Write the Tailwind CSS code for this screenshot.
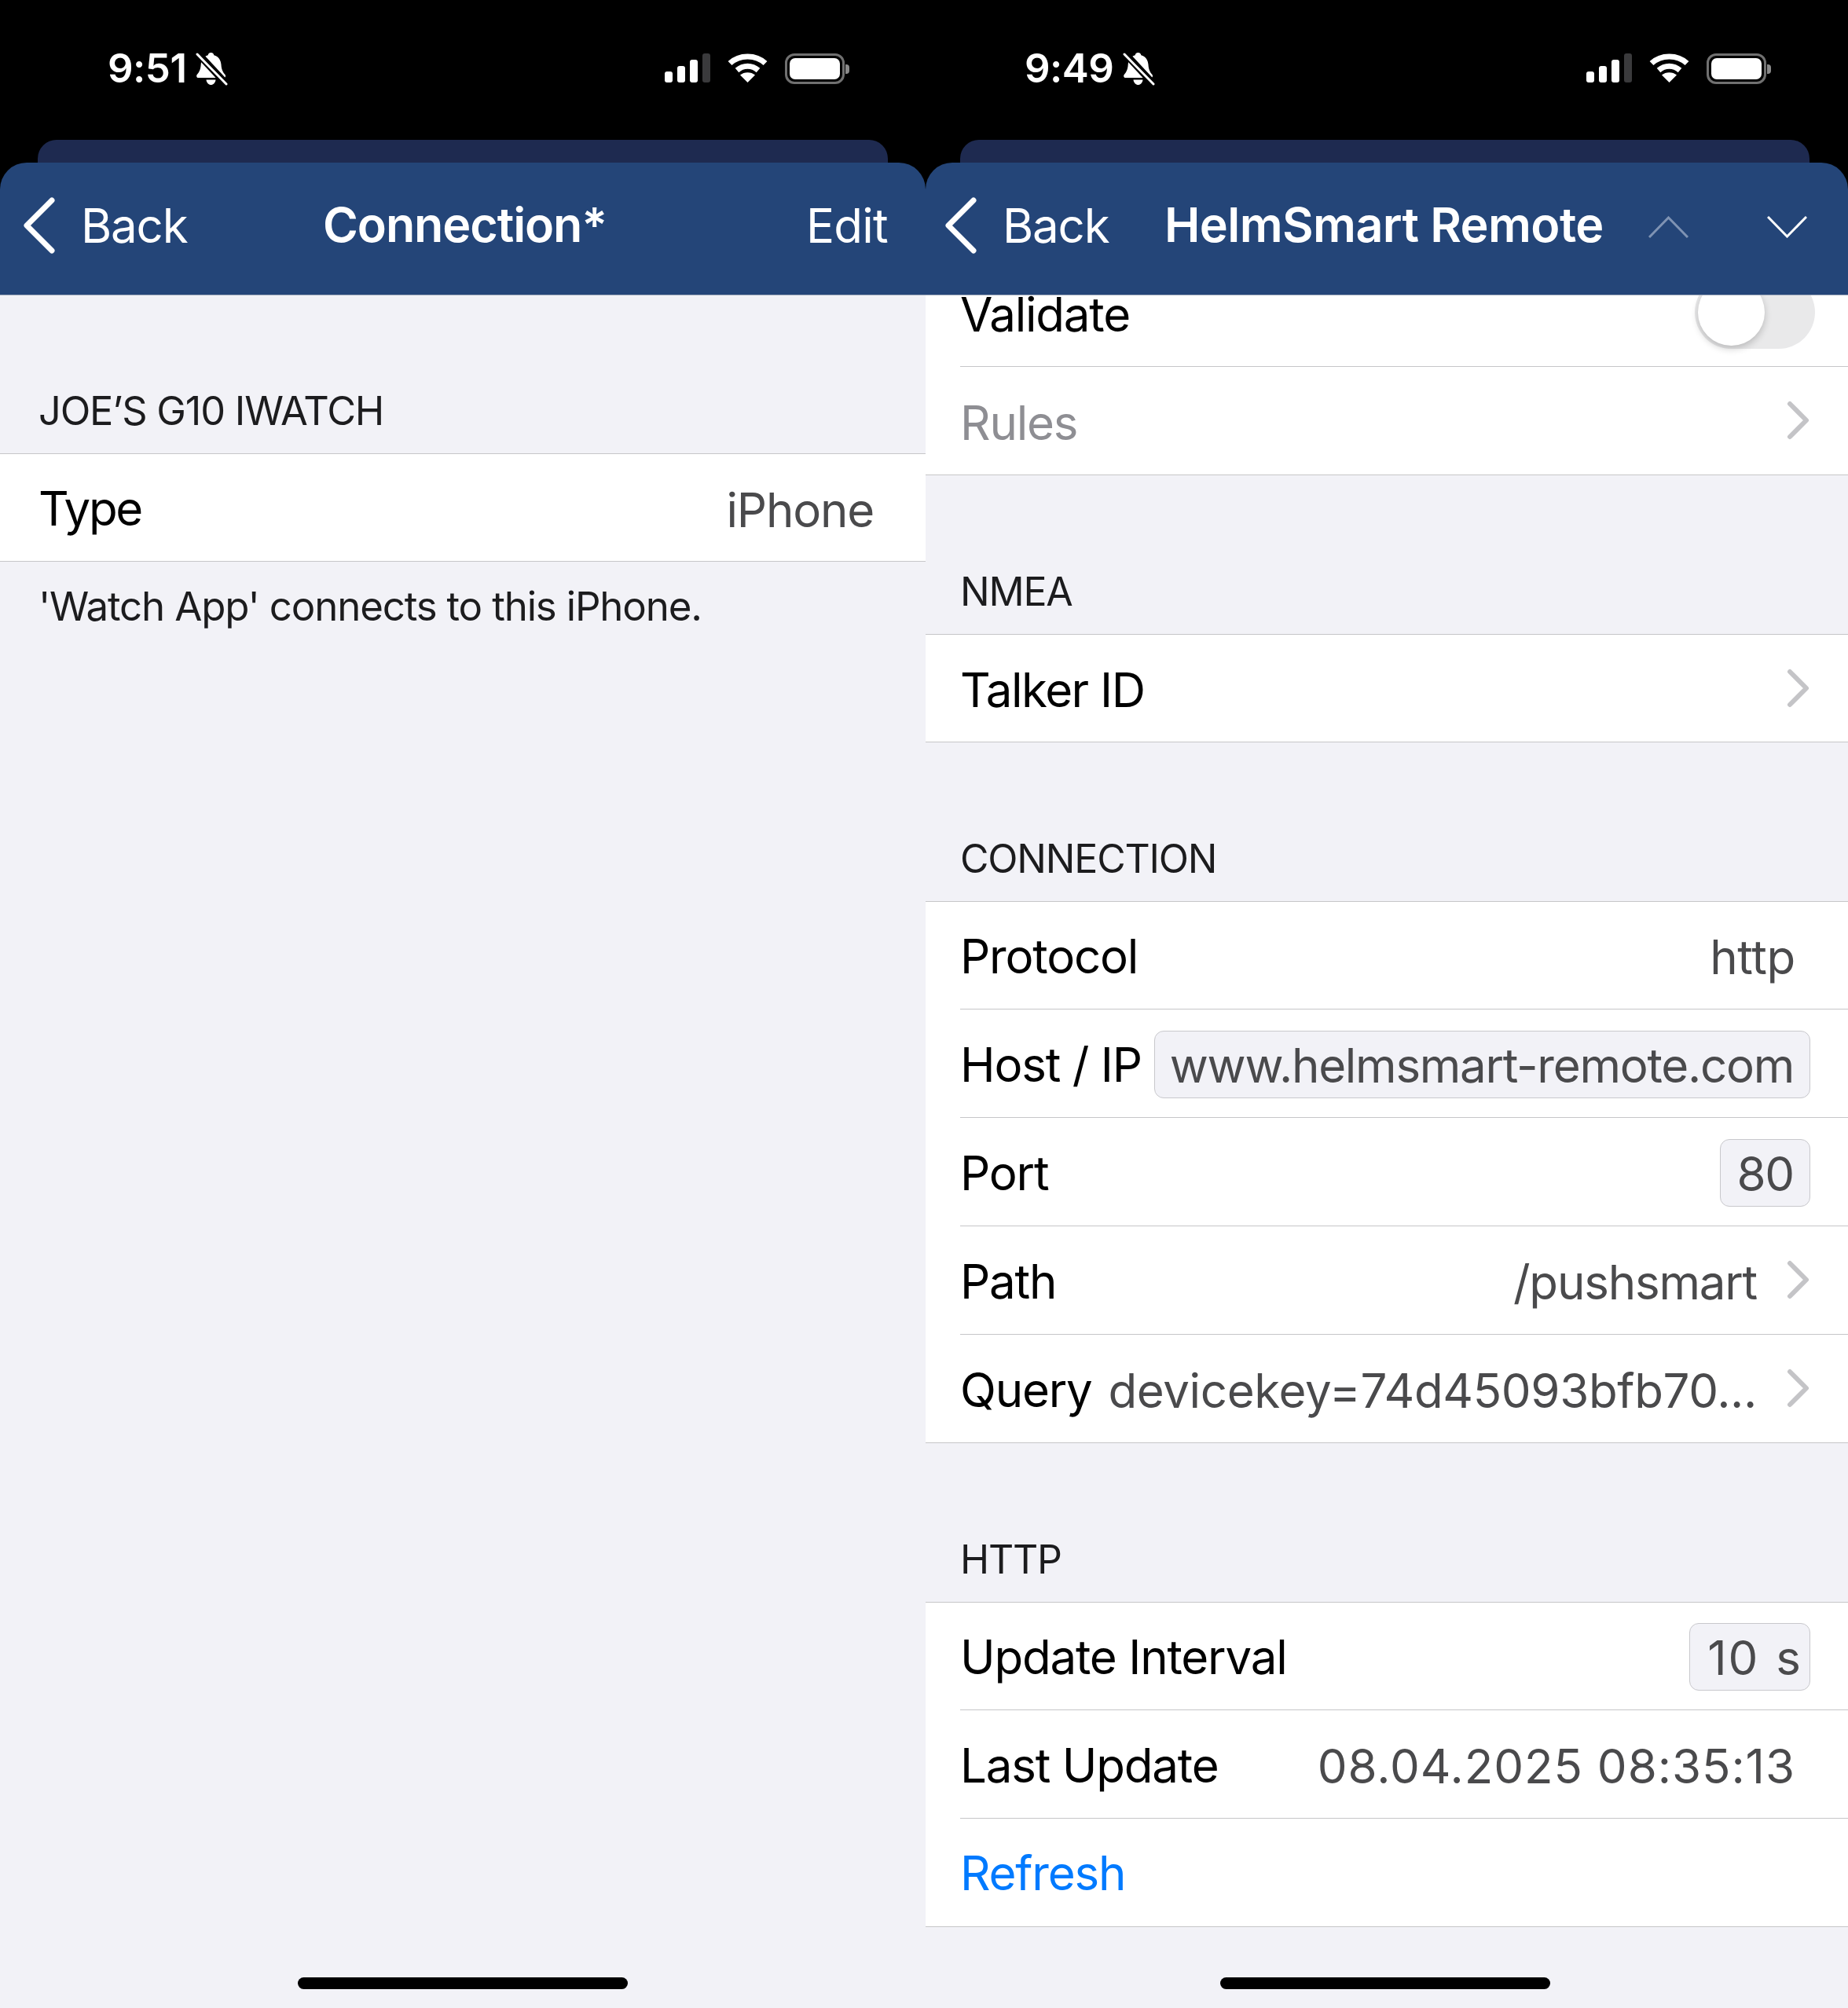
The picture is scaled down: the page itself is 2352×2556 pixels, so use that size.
<!DOCTYPE html>
<html lang="en">

<head>
    <meta charset="UTF-8">
    <meta name="viewport" content="width=device-width, initial-scale=1.0">
    <script src="https://cdn.jsdelivr.net/npm/@tailwindcss/browser@4"></script>
    <title>Connection | HelmSmart Remote</title>
</head>

<body class="bg-black [font-family:Inter,'Liberation_Sans',sans-serif] text-[60px] tracking-[-0.02em] text-black">
    <svg class="hidden">
        <symbol id="bell" viewBox="0 0 42 43">
            <path fill="#fff" d="M19.500 1c2.300 0 3.600 1.400 3.800 3.200 6 1.500 8.800 6.500 9.200 12 .4 6 1.900 9.300 5 12.800 1.200 1.800.3 4-1.800 4H3.500c-2.100 0-3-2.200-1.800-4 3.100-3.500 4.600-6.800 5-12.800.4-5.500 3.200-10.500 9-12C15.900 2.400 17.200 1 19.500 1z" />
            <path fill="#fff" d="M13.500 35.500h12c-.5 4-3 6.500-6 6.500s-5.500-2.500-6-6.500z" />
            <path stroke="#000" stroke-width="9" d="M1 0l40 43" />
            <path stroke="#fff" stroke-width="3" stroke-linecap="round" d="M2 3l37 38" />
        </symbol>
        <symbol id="wifi" viewBox="0 0 51 37">
            <path fill="none" stroke="#fff" stroke-width="7" d="M3 12.500C15 1 36 1 48 12.500" />
            <path fill="none" stroke="#fff" stroke-width="7" d="M12 21.500c8-7 19-7 27 0" />
            <path fill="#fff" d="M25.500 37L16 27.500c5-4.500 14-4.500 19 0z" />
        </symbol>
        <symbol id="chevron" viewBox="0 0 30 50">
            <path fill="none" stroke="#c4c4c7" stroke-width="6" stroke-linecap="round" stroke-linejoin="round" d="M4 4l21 21L4 46" />
        </symbol>
        <symbol id="back" viewBox="0 0 42 72">
            <path fill="none" stroke="#fff" stroke-width="7" stroke-linecap="round" stroke-linejoin="round" d="M37 4L5 36l32 32" />
        </symbol>
    </svg>

    <div class="grid grid-cols-[1178px_1174px] h-[2556px] overflow-hidden">
        <!-- Left phone -->
        <div class="flex flex-col bg-black">
            <div class="h-[178px] flex items-start justify-between pl-[137px] pr-[97px] pt-[62px] text-white">
                <div class="flex items-center gap-[12px] h-[50px] text-[51px]">
                    <span class="font-semibold tracking-[-0.01em]">9:51</span>
                    <svg class="w-[42px] h-[43px]"><use href="#bell" /></svg>
                </div>
                <div class="flex items-start gap-[22px] h-[50px] pt-[6px]">
                    <div class="flex items-end gap-[6px] h-[37px]">
                        <div class="w-[10px] h-[14px] rounded-[3px] bg-white"></div>
                        <div class="w-[10px] h-[21px] rounded-[3px] bg-white"></div>
                        <div class="w-[10px] h-[29px] rounded-[3px] bg-white"></div>
                        <div class="w-[10px] h-[37px] rounded-[3px] bg-[#3a3a3c]"></div>
                    </div>
                    <svg class="w-[51px] h-[37px]"><use href="#wifi" /></svg>
                    <div class="flex items-center">
                        <div class="w-[76px] h-[39px] rounded-[12px] border-[3px] border-[#707070] p-[3px]">
                            <div class="w-full h-full rounded-[7px] bg-white"></div>
                        </div>
                        <div class="w-[5px] h-[12px] rounded-r-[4px] bg-[#8a8a8a] ml-[1px]"></div>
                    </div>
                </div>
            </div>
            <div class="h-[29px] mx-[48px] rounded-t-[24px] bg-[#1e2a50]"></div>
            <div class="h-[169px] rounded-t-[34px] bg-[#244578] border-b border-[#9aa5b8] flex items-center pb-[8px] text-white">
                <div class="w-[411px] flex items-center pl-[29px] gap-[32px]">
                    <svg class="w-[42px] h-[72px]"><use href="#back" /></svg>
                    <span>Back</span>
                </div>
                <span class="font-semibold text-[61px] tracking-[-0.018em]">Connection*</span>
                <span class="ml-auto pr-[48px] tracking-[-0.012em]">Edit</span>
            </div>
            <div class="flex-1 bg-[#f2f2f7] flex flex-col">
                <div class="h-[201px] px-[49px] pb-[24px] flex items-end text-[50.500px] leading-[60px] text-[#1c1c1e]">JOE’S G10 IWATCH</div>
                <div class="h-[138px] bg-white border-y border-[#c6c6c8] flex items-center justify-between pl-[49px] pr-[66px] pt-[2px]">
                    <span class="tracking-[-0.04em]">Type</span>
                    <span class="text-[#4a4a4c] pt-[3px]">iPhone</span>
                </div>
                <div class="px-[49px] pt-[27px] text-[51px] leading-[60px] tracking-[-0.023em] text-[#1c1c1e]">'Watch App' connects to this iPhone.</div>
                <div class="mt-auto h-[50px] flex justify-center items-start pt-[11px]">
                    <div class="w-[420px] h-[15px] rounded-full bg-black"></div>
                </div>
            </div>
        </div>

        <!-- Right phone -->
        <div class="flex flex-col bg-black">
            <div class="h-[178px] flex items-start justify-between pl-[126px] pr-[98px] pt-[62px] text-white">
                <div class="flex items-center gap-[12px] h-[50px] text-[51px]">
                    <span class="font-semibold tracking-[-0.01em]">9:49</span>
                    <svg class="w-[42px] h-[43px]"><use href="#bell" /></svg>
                </div>
                <div class="flex items-start gap-[22px] h-[50px] pt-[6px]">
                    <div class="flex items-end gap-[6px] h-[37px]">
                        <div class="w-[10px] h-[14px] rounded-[3px] bg-white"></div>
                        <div class="w-[10px] h-[21px] rounded-[3px] bg-white"></div>
                        <div class="w-[10px] h-[29px] rounded-[3px] bg-white"></div>
                        <div class="w-[10px] h-[37px] rounded-[3px] bg-[#3a3a3c]"></div>
                    </div>
                    <svg class="w-[51px] h-[37px]"><use href="#wifi" /></svg>
                    <div class="flex items-center">
                        <div class="w-[76px] h-[39px] rounded-[12px] border-[3px] border-[#707070] p-[3px]">
                            <div class="w-full h-full rounded-[7px] bg-white"></div>
                        </div>
                        <div class="w-[5px] h-[12px] rounded-r-[4px] bg-[#8a8a8a] ml-[1px]"></div>
                    </div>
                </div>
            </div>
            <div class="h-[29px] ml-[44px] mr-[49px] rounded-t-[24px] bg-[#1e2a50]"></div>
            <div class="h-[169px] rounded-t-[34px] bg-[#244578] border-b border-[#9aa5b8] flex items-center pb-[8px] text-white">
                <div class="w-[304px] flex items-center pl-[24px] gap-[32px]">
                    <svg class="w-[42px] h-[72px]"><use href="#back" /></svg>
                    <span>Back</span>
                </div>
                <span class="font-semibold text-[61px] tracking-[-0.01em]">HelmSmart Remote</span>
                <div class="ml-auto flex items-center gap-[100px] pr-[52px] pt-[4px]">
                    <svg class="w-[51px] h-[28px]" viewBox="0 0 51 28"><path fill="none" stroke="#7f93b3" stroke-width="3" d="M1 27L25.500 2 50 27" /></svg>
                    <svg class="w-[51px] h-[28px]" viewBox="0 0 51 28"><path fill="none" stroke="#fff" stroke-width="3" d="M1 1l24.500 25L50 1" /></svg>
                </div>
            </div>

            <div class="flex-1 bg-[#f2f2f7] flex flex-col">
                <div class="bg-white border-b border-[#c6c6c8]">
                    <div class="ml-[44px] h-[91px] border-b border-[#c6c6c8] flex items-end justify-between pr-[42px] pb-[22px] overflow-hidden">
                        <span class="leading-[50px] mb-[19px]">Validate</span>
                        <div class="w-[153px] h-[93px] shrink-0 rounded-full bg-[#e9e9ea] p-[4px]">
                            <div class="w-[85px] h-[85px] rounded-full bg-white shadow-[0_4px_10px_rgba(0,0,0,0.2)]"></div>
                        </div>
                    </div>
                    <div class="ml-[44px] h-[137px] flex items-center justify-between pr-[48px] pt-[4px]">
                        <span class="text-[#8e8e93]">Rules</span>
                        <svg class="w-[30px] h-[50px] -mt-[6px]"><use href="#chevron" /></svg>
                    </div>
                </div>

                <div class="h-[202px] px-[44px] pb-[24px] flex items-end text-[50px] leading-[60px] text-[#1c1c1e]">NMEA</div>
                <div class="bg-white border-y border-[#c6c6c8]">
                    <div class="ml-[44px] h-[136px] flex items-center justify-between pr-[48px] pt-[3px]">
                        <span class="tracking-[-0.025em]">Talker ID</span>
                        <svg class="w-[30px] h-[50px] -mt-[4px]"><use href="#chevron" /></svg>
                    </div>
                </div>

                <div class="h-[202px] px-[44px] pb-[24px] flex items-end text-[50px] leading-[60px] text-[#1c1c1e]">CONNECTION</div>
                <div class="bg-white border-y border-[#c6c6c8]">
                    <div class="ml-[44px] h-[137px] border-b border-[#c6c6c8] flex items-center justify-between pr-[67px] pt-[2px]">
                        <span>Protocol</span>
                        <span class="text-[#4a4a4c] pt-[2px] tracking-[-0.005em]">http</span>
                    </div>
                    <div class="ml-[44px] h-[138px] border-b border-[#c6c6c8] flex items-center justify-between pr-[48px] pt-[2px]">
                        <span>Host / IP</span>
                        <div class="h-[86px] rounded-[12px] border border-[#c8c8cc] bg-[#f2f2f7] pl-[19px] pr-[20px] pt-[2px] flex items-center text-[#4a4a4c] tracking-[-0.021em]">www.helmsmart-remote.com</div>
                    </div>
                    <div class="ml-[44px] h-[138px] border-b border-[#c6c6c8] flex items-center justify-between pr-[48px] pt-[3px]">
                        <span>Port</span>
                        <div class="h-[86px] rounded-[12px] border border-[#c8c8cc] bg-[#f2f2f7] px-[20px] pt-[2px] flex items-center text-[#4a4a4c]">80</div>
                    </div>
                    <div class="ml-[44px] h-[138px] border-b border-[#c6c6c8] flex items-center justify-between pr-[48px] pt-[2px]">
                        <span>Path</span>
                        <div class="flex items-center gap-[38px]">
                            <span class="text-[#4a4a4c] pt-[2px]">/pushsmart</span>
                            <svg class="w-[30px] h-[50px] -mt-[4px]"><use href="#chevron" /></svg>
                        </div>
                    </div>
                    <div class="ml-[44px] h-[137px] flex items-center justify-between pr-[48px] pt-[2px]">
                        <span>Query</span>
                        <div class="flex items-center gap-[38px]">
                            <span class="text-[#4a4a4c] pt-[2px] tracking-[-0.35px]">devicekey=74d45093bfb70...</span>
                            <svg class="w-[30px] h-[50px] -mt-[4px]"><use href="#chevron" /></svg>
                        </div>
                    </div>
                </div>

                <div class="h-[202px] px-[44px] pb-[24px] flex items-end text-[50px] leading-[60px] text-[#1c1c1e]">HTTP</div>
                <div class="bg-white border-y border-[#c6c6c8]">
                    <div class="ml-[44px] h-[137px] border-b border-[#c6c6c8] flex items-center justify-between pr-[48px] pt-[2px]">
                        <span>Update Interval</span>
                        <div class="h-[86px] rounded-[12px] border border-[#c8c8cc] bg-[#f2f2f7] pl-[22px] pr-[9px] pt-[1px] flex items-center text-[#4a4a4c] tracking-[2px] [word-spacing:2px]">10 s</div>
                    </div>
                    <div class="ml-[44px] h-[138px] border-b border-[#c6c6c8] flex items-center justify-between pr-[67px] pt-[3px]">
                        <span>Last Update</span>
                        <span class="text-[#4a4a4c] pt-[2px] tracking-[0.95px]">08.04.2025 08:35:13</span>
                    </div>
                    <div class="ml-[44px] h-[137px] flex items-center">
                        <span class="text-[#007aff]">Refresh</span>
                    </div>
                </div>

                <div class="mt-auto h-[50px] flex justify-center items-start pt-[11px] pr-[5px]">
                    <div class="w-[420px] h-[15px] rounded-full bg-black"></div>
                </div>
            </div>
        </div>
    </div>
</body>

</html>
